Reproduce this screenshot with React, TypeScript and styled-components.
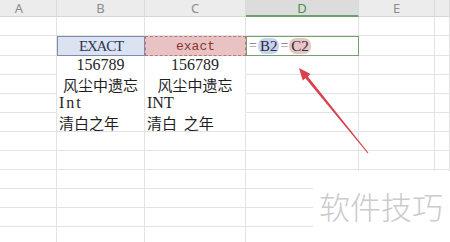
import React from "react";
import styled, { createGlobalStyle, css } from "styled-components";

const Global = createGlobalStyle`
  html, body { margin: 0; padding: 0; background: #fff; }
  body { width: 450px; height: 242px; overflow: hidden; }
`;

const Sheet = styled.div`
  position: relative;
  width: 450px;
  height: 242px;
  overflow: hidden;
  background: #fff;
`;

const Grid = styled.div`
  display: grid;
  grid-template-columns: 57px 88px 101px 113px 76px 1fr;
  grid-template-rows: 17px 19px 20px repeat(10, 19px);
`;

const HeaderCell = styled.div<{ $active?: boolean; $shift?: number }>`
  box-sizing: border-box;
  display: flex;
  align-items: flex-start;
  justify-content: center;
  padding-top: 1px;
  padding-right: ${(p) => p.$shift ?? 0}px;
  background: ${(p) => (p.$active ? "#dcdcdc" : "#ececec")};
  border-right: 1px solid #dadada;
  border-bottom: ${(p) => (p.$active ? "2px solid #6f9f6a" : "1px solid #d6d6d6")};
  font-family: "Noto Sans", "Liberation Sans", sans-serif;
  font-size: 13px;
  line-height: 14px;
  color: ${(p) => (p.$active ? "#4d8c4a" : "#8c8c8c")};
`;

type Frame = "blue" | "pink" | "green";

const frames: Record<Frame, ReturnType<typeof css>> = {
  blue: css`
    background: #dbe3f3;
    border: 1px solid #7e8bb0;
  `,
  pink: css`
    background: #e9c3c3;
    border: 1px dashed #b97676;
  `,
  green: css`
    background: #fff;
    border: 1px solid #72a36d;
  `,
};

const Cell = styled.div<{ $align?: "left" | "center"; $open?: boolean; $frame?: Frame }>`
  box-sizing: border-box;
  display: flex;
  align-items: center;
  justify-content: ${(p) => (p.$align === "center" ? "center" : "flex-start")};
  padding-left: ${(p) => (p.$align === "center" ? 0 : 2)}px;
  border-right: 1px solid #e3e3e3;
  border-bottom: 1px solid ${(p) => (p.$open ? "#fff" : "#e3e3e3")};
  font-family: "Liberation Serif", "Noto Sans CJK SC", serif;
  font-size: 16px;
  color: #1e1e1e;
  white-space: pre;
  overflow: visible;
  ${(p) => (p.$frame ? frames[p.$frame] : "")}
`;

const Caps = styled.span`
  font-size: 15px;
  letter-spacing: -1.2px;
  color: #2e3550;
`;

const Spaced = styled.span`
  letter-spacing: 2px;
`;

const Mono = styled.span`
  font-family: "Liberation Mono", monospace;
  font-size: 13px;
  color: #8a3535;
`;

const Han = styled.span`
  font-family: "Noto Sans CJK SC", sans-serif;
  font-size: 15px;
  color: #1e1e1e;
`;

const Eq = styled.span`
  color: #777;
  font-size: 14px;
`;

const Ref = styled.span<{ $tone: "blue" | "pink" }>`
  display: inline-block;
  padding: 0 2px;
  border-radius: 7px;
  line-height: 16px;
  background: ${(p) => (p.$tone === "blue" ? "#c9d3ee" : "#e9c6c6")};
  color: #2b2b3a;
`;

const Formula = styled.div`
  display: flex;
  align-items: center;
  gap: 1px;
  font-size: 15px;
`;

const Watermark = styled.div`
  position: absolute;
  left: 313px;
  top: 171px;
  right: 0;
  bottom: 0;
  background: #fff;
  display: flex;
  align-items: center;
  padding-left: 6px;
  padding-bottom: 2px;
  font-family: "Noto Sans CJK SC", sans-serif;
  font-size: 31px;
  font-weight: 300;
  color: #cbcbcb;
`;

const ArrowLayer = styled.svg`
  position: absolute;
  left: 0;
  top: 0;
  pointer-events: none;
`;

const columns = ["A", "B", "C", "D", "E", ""];

type CellSpec = {
  content?: React.ReactNode;
  align?: "left" | "center";
  open?: boolean;
  frame?: Frame;
};

const blank = (): CellSpec => ({});

const rows: CellSpec[][] = [
  [blank(), blank(), blank(), blank(), blank(), blank()],
  [
    blank(),
    { content: <Caps>EXACT</Caps>, align: "center", frame: "blue" },
    { content: <Mono>exact</Mono>, align: "center", frame: "pink" },
    {
      content: (
        <Formula>
          <Eq>=</Eq>
          <Ref $tone="blue">B2</Ref>
          <Eq>=</Eq>
          <Ref $tone="pink">C2</Ref>
        </Formula>
      ),
      frame: "green",
    },
    blank(),
    blank(),
  ],
  [
    blank(),
    { content: "156789", align: "center", open: true },
    { content: "156789", align: "center", open: true },
    blank(),
    blank(),
    blank(),
  ],
  [
    blank(),
    { content: <Han>风尘中遗忘</Han>, align: "center", open: true },
    { content: <Han>风尘中遗忘</Han>, align: "center", open: true },
    blank(),
    blank(),
    blank(),
  ],
  [
    blank(),
    { content: <Spaced>Int</Spaced>, open: true },
    { content: "INT", open: true },
    blank(),
    blank(),
    blank(),
  ],
  [
    blank(),
    { content: <Han>清白之年</Han> },
    { content: <Han>清白  之年</Han> },
    blank(),
    blank(),
    blank(),
  ],
  ...Array.from({ length: 7 }, () => columns.map(() => blank())),
];

export default function App() {
  return (
    <Sheet>
      <Global />
      <Grid>
        {columns.map((c, i) => (
          <HeaderCell key={`h${i}`} $active={c === "D"} $shift={c === "A" ? 18 : 0}>
            {c}
          </HeaderCell>
        ))}
        {rows.map((row, r) =>
          row.map((cell, c) => (
            <Cell
              key={`${r}-${c}`}
              $align={cell.align}
              $open={cell.open}
              $frame={cell.frame}
            >
              {cell.content}
            </Cell>
          ))
        )}
      </Grid>
      <ArrowLayer width="450" height="242" viewBox="0 0 450 242">
        <polygon
          points="299,68 310.5,74.1 307.8,76.4 368.4,152.7 367.6,153.3 305.4,78.2 302.7,80.5"
          fill="#d9414b"
        />
      </ArrowLayer>
      <Watermark>软件技巧</Watermark>
    </Sheet>
  );
}
